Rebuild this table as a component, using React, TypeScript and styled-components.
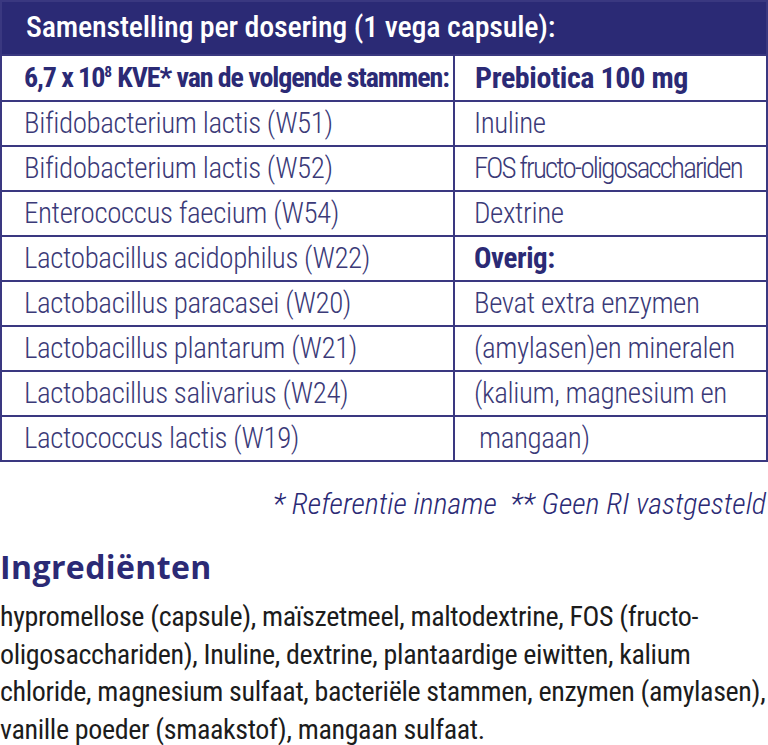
import React from "react"
import styled, { createGlobalStyle } from "styled-components"

const Global = createGlobalStyle`
  body {
    margin: 0;
    background: #fff;
    font-family: "Roboto Condensed", "Liberation Sans", sans-serif;
  }
`

const Page = styled.div`
  width: 768px;
`

const Table = styled.table`
  width: 100%;
  border-collapse: collapse;
  table-layout: fixed;
  border: 2px solid #3a3880;
`

const Col = styled.col<{ $width?: string }>`
  width: ${({ $width }) => $width || "auto"};
`

const Caption = styled.th`
  background: #2b2a75;
  color: #fff;
  text-align: start;
  font-weight: 500;
  font-size: 30px;
  letter-spacing: -0.2px;
  height: 54px;
  padding: 0 0 4px 24px;
  box-sizing: border-box;
`

const Th = styled.th<{ $tight?: boolean }>`
  text-align: start;
  color: #2b2a75;
  font-weight: 700;
  font-size: ${({ $tight }) => ($tight ? "28px" : "30px")};
  letter-spacing: ${({ $tight }) => ($tight ? "-1.1px" : "-0.4px")};
  height: 46px;
  padding: 0 0 2px ${({ $tight }) => ($tight ? "22px" : "20px")};
  border: 2px solid #3a3880;
  box-sizing: border-box;
  white-space: nowrap;
`

const Sup = styled.sup`
  font-size: 0.55em;
  letter-spacing: 0;
`

const Td = styled.td<{ $bold?: boolean; $tight?: boolean; $pad?: number }>`
  color: ${({ $bold }) => ($bold ? "#2b2a75" : "#3b3a78")};
  font-weight: ${({ $bold }) => ($bold ? 700 : 300)};
  font-size: 29px;
  letter-spacing: ${({ $tight }) => ($tight ? "-1.9px" : "-0.4px")};
  height: 45px;
  padding: 0 0 2px ${({ $pad }) => $pad ?? 22}px;
  border: 2px solid #3a3880;
  box-sizing: border-box;
  white-space: nowrap;
`

const Footnote = styled.p`
  margin: 24px 2px 0 0;
  text-align: right;
  font-style: italic;
  font-weight: 300;
  font-size: 30px;
  color: #2b2a75;
  white-space: pre;
`

const Heading = styled.h2`
  margin: 24px 0 0;
  font-family: "Open Sans", "Noto Sans", sans-serif;
  font-weight: 700;
  font-size: 32px;
  letter-spacing: 0.4px;
  color: #2b2a75;
`

const Paragraph = styled.p`
  margin: 10px 0 0;
  font-size: 28px;
  line-height: 37.5px;
  font-weight: 400;
  color: #1c1c1c;
  letter-spacing: -0.35px;
  white-space: nowrap;
`

type Row = { left: string; right: string; bold?: boolean; tight?: boolean; indent?: boolean }

const rows: Row[] = [
  { left: "Bifidobacterium lactis (W51)", right: "Inuline" },
  { left: "Bifidobacterium lactis (W52)", right: "FOS fructo-oligosacchariden", tight: true },
  { left: "Enterococcus faecium (W54)", right: "Dextrine" },
  { left: "Lactobacillus acidophilus (W22)", right: "Overig:", bold: true },
  { left: "Lactobacillus paracasei (W20)", right: "Bevat extra enzymen" },
  { left: "Lactobacillus plantarum (W21)", right: "(amylasen)en mineralen" },
  { left: "Lactobacillus salivarius (W24)", right: "(kalium, magnesium en" },
  { left: "Lactococcus lactis (W19)", right: "mangaan)", indent: true },
]

export default function App() {
  return (
    <Page>
      <Global />
      <Table>
        <colgroup>
          <Col $width="453px" />
          <Col />
        </colgroup>
        <thead>
          <tr>
            <Caption colSpan={2}>Samenstelling per dosering (1 vega capsule):</Caption>
          </tr>
          <tr>
            <Th $tight>
              6,7 x 10<Sup>8</Sup> KVE* van de volgende stammen:
            </Th>
            <Th>Prebiotica 100 mg</Th>
          </tr>
        </thead>
        <tbody>
          {rows.map((row, i) => (
            <tr key={i}>
              <Td>{row.left}</Td>
              <Td $bold={row.bold} $tight={row.tight} $pad={row.indent ? 24 : 19}>
                {row.right}
              </Td>
            </tr>
          ))}
        </tbody>
      </Table>
      <Footnote>{"* Referentie inname  ** Geen RI vastgesteld"}</Footnote>
      <Heading>Ingrediënten</Heading>
      <Paragraph>
        hypromellose (capsule), maïszetmeel, maltodextrine, FOS (fructo-
        <br />
        oligosacchariden), Inuline, dextrine, plantaardige eiwitten, kalium
        <br />
        chloride, magnesium sulfaat, bacteriële stammen, enzymen (amylasen),
        <br />
        vanille poeder (smaakstof), mangaan sulfaat.
      </Paragraph>
    </Page>
  )
}
